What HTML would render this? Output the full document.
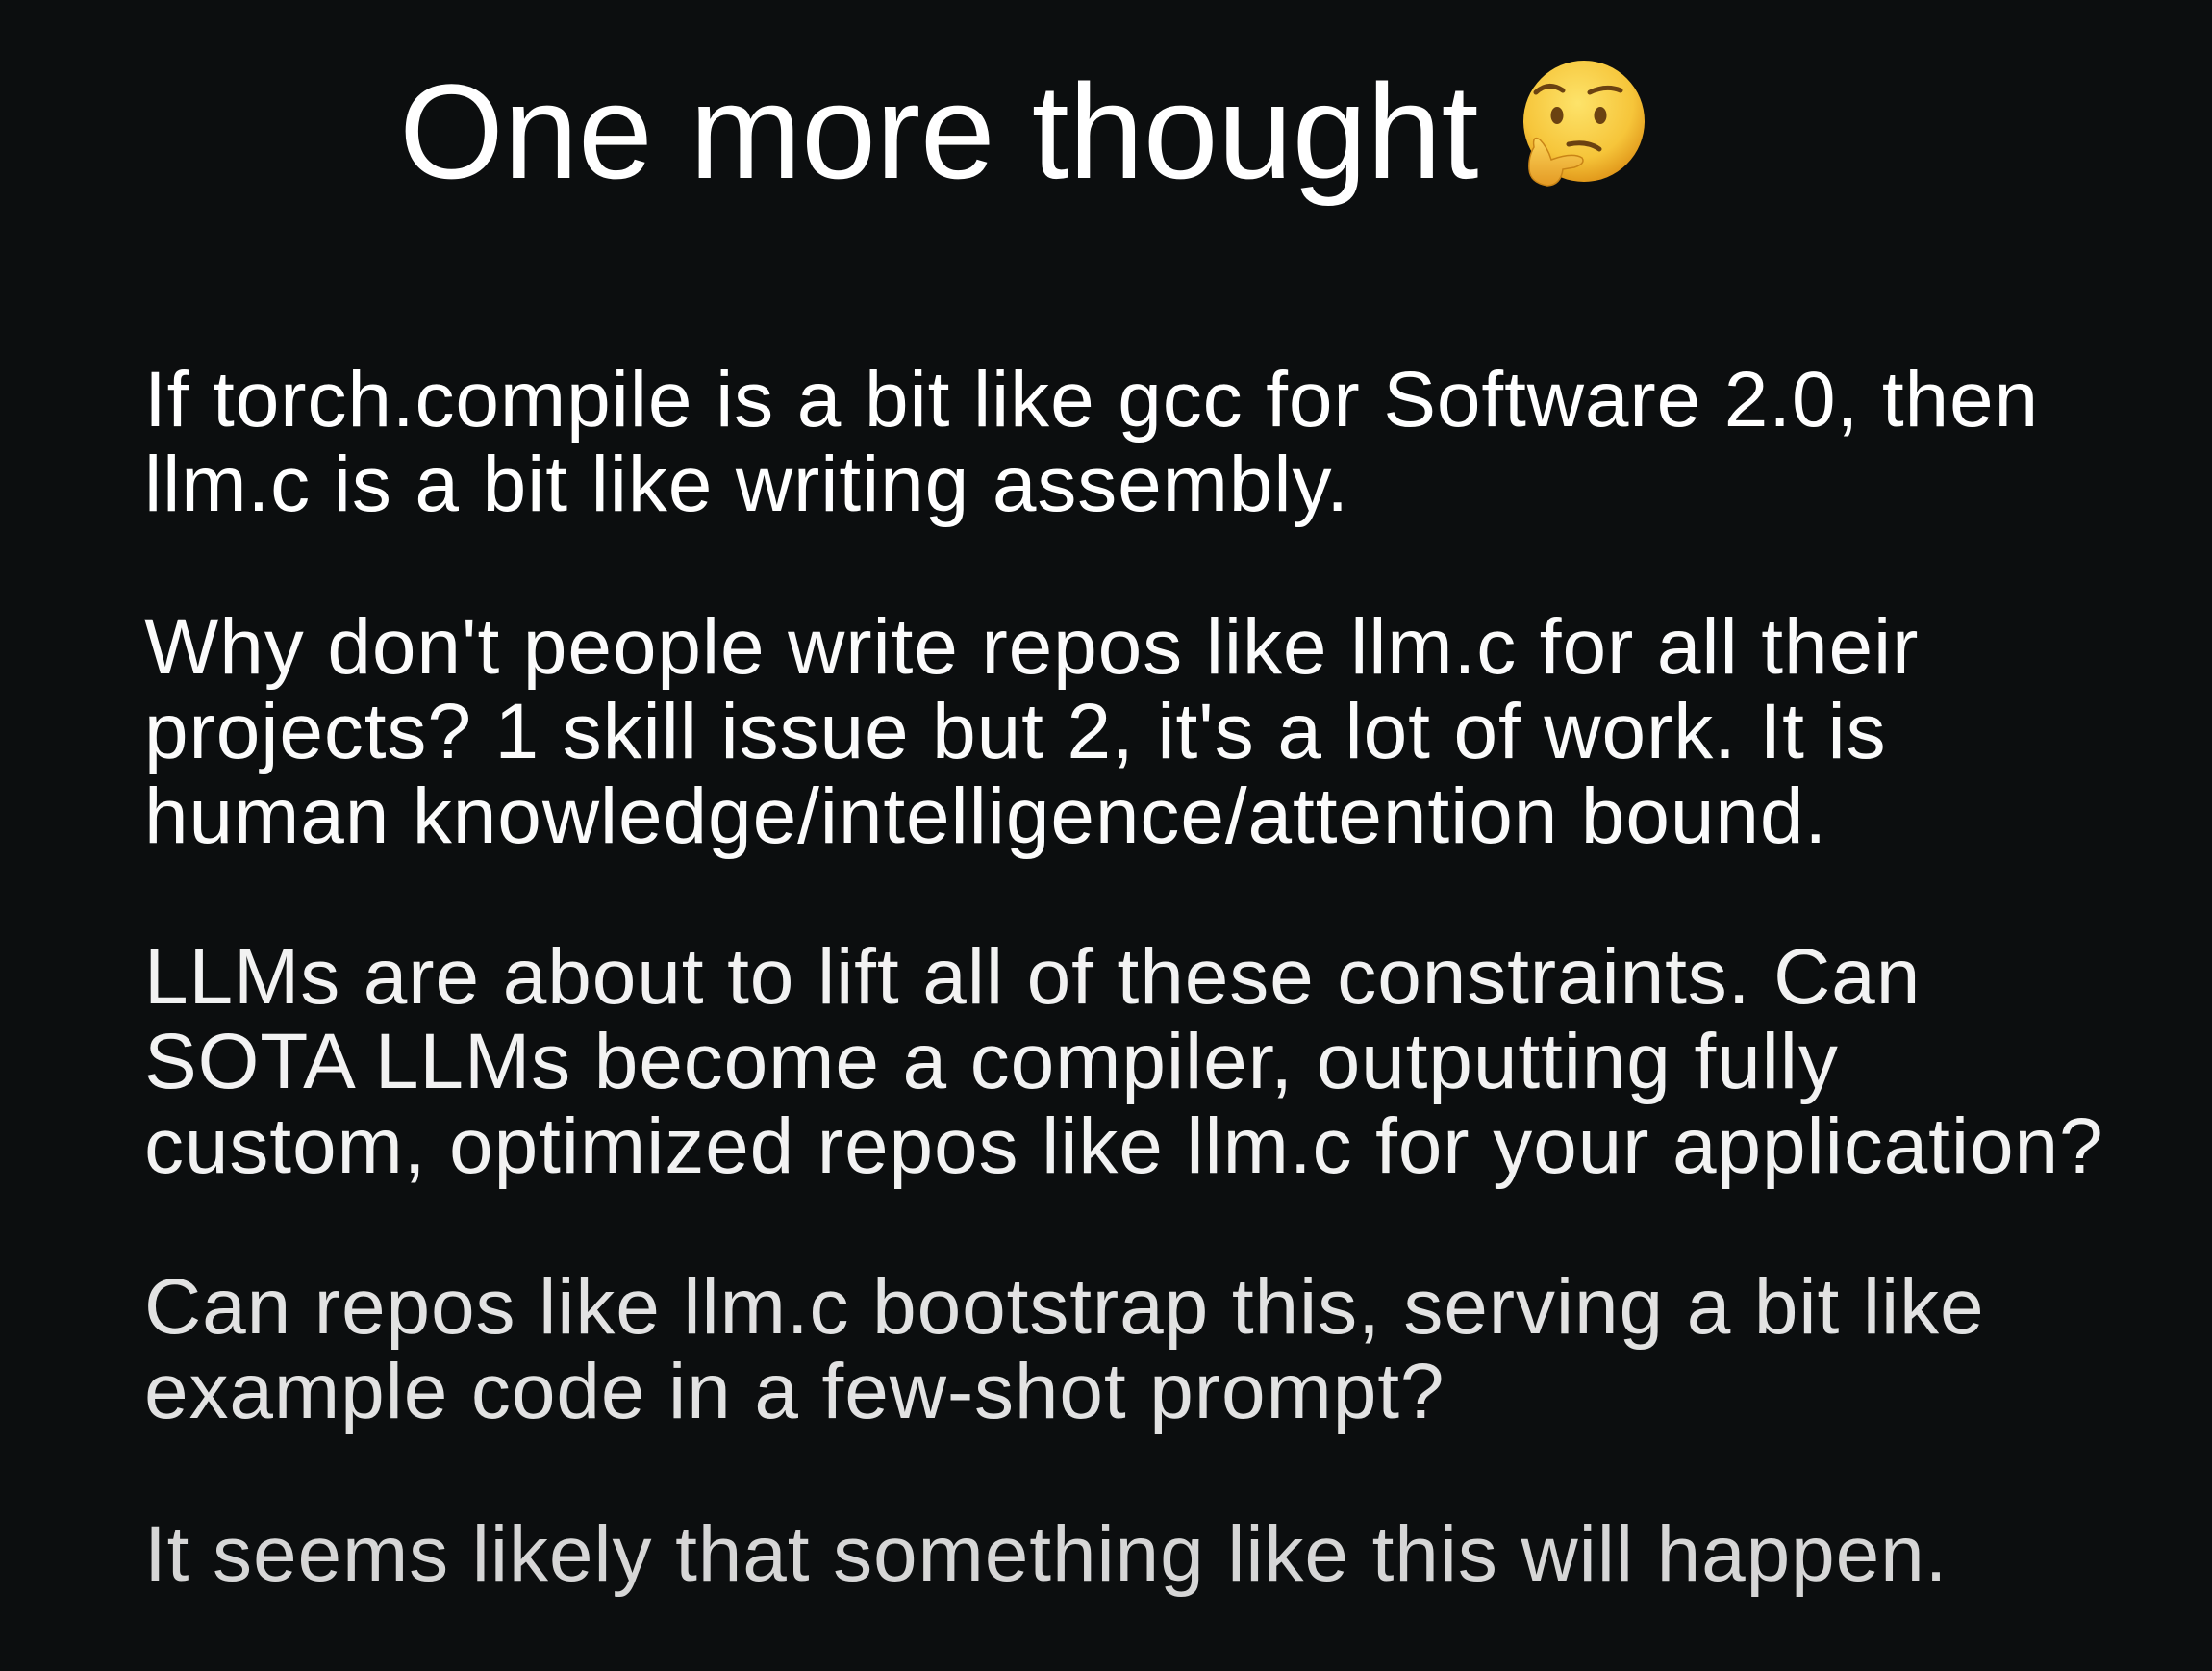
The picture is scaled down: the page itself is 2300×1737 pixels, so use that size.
<!DOCTYPE html>
<html><head><meta charset="utf-8"><style>
html,body{margin:0;padding:0;background:#0c0e0f;}
body{width:2300px;height:1737px;position:relative;overflow:hidden;font-family:"Liberation Sans",Arial,sans-serif;}
.t{position:absolute;left:415px;top:67px;font-size:140px;line-height:1;color:#fff;white-space:nowrap;letter-spacing:-0.4px;}
.l{position:absolute;left:150px;font-size:82px;line-height:1;white-space:nowrap;letter-spacing:0.9px;}
</style></head><body>
<div class="t">One more thought</div>
<svg style="position:absolute;left:1575px;top:58px" width="140" height="140" viewBox="0 0 140 140">
<defs><radialGradient id="g" cx="45%" cy="35%" r="65%"><stop offset="0" stop-color="#fde36a"/><stop offset="0.7" stop-color="#f6c53a"/><stop offset="1" stop-color="#e29a1c"/></radialGradient>
<linearGradient id="h" x1="0" y1="0" x2="0" y2="1"><stop offset="0" stop-color="#fcd55a"/><stop offset="1" stop-color="#e49a24"/></linearGradient></defs>
<circle cx="72" cy="68" r="63" fill="url(#g)"/>
<path d="M22 38 Q35 26 50 36" stroke="#6b4211" stroke-width="5" fill="none" stroke-linecap="round"/>
<path d="M78 38 Q95 30 110 36" stroke="#6b4211" stroke-width="5" fill="none" stroke-linecap="round"/>
<ellipse cx="44" cy="62" rx="6.5" ry="9" fill="#6b4211"/>
<ellipse cx="89" cy="62" rx="6.5" ry="9" fill="#6b4211"/>
<path d="M56 92 Q75 88 88 97" stroke="#6b4211" stroke-width="5" fill="none" stroke-linecap="round"/>
<path d="M20 95 Q18 82 26 87 Q34 95 38 108 Q60 100 70 106 Q74 112 62 116 L50 118 Q48 134 34 135 Q16 132 15 118 Q14 105 20 95Z" fill="url(#h)" stroke="#c98416" stroke-width="1.5"/>
</svg>
<div class="l" style="top:375px;color:#fff">If torch.compile is a bit like gcc for Software 2.0, then</div>
<div class="l" style="top:463px;color:#fff">llm.c is a bit like writing assembly.</div>
<div class="l" style="top:632px;color:#fbfbfb">Why don't people write repos like llm.c for all their</div>
<div class="l" style="top:720px;color:#fbfbfb">projects? 1 skill issue but 2, it's a lot of work. It is</div>
<div class="l" style="top:808px;color:#fbfbfb">human knowledge/intelligence/attention bound.</div>
<div class="l" style="top:975px;color:#f2f2f2">LLMs are about to lift all of these constraints. Can</div>
<div class="l" style="top:1063px;color:#f2f2f2">SOTA LLMs become a compiler, outputting fully</div>
<div class="l" style="top:1151px;color:#f2f2f2">custom, optimized repos like llm.c for your application?</div>
<div class="l" style="top:1318px;color:#e2e2e2">Can repos like llm.c bootstrap this, serving a bit like</div>
<div class="l" style="top:1406px;color:#e2e2e2">example code in a few-shot prompt?</div>
<div class="l" style="top:1575px;color:#d6d6d6">It seems likely that something like this will happen.</div>
</body></html>
